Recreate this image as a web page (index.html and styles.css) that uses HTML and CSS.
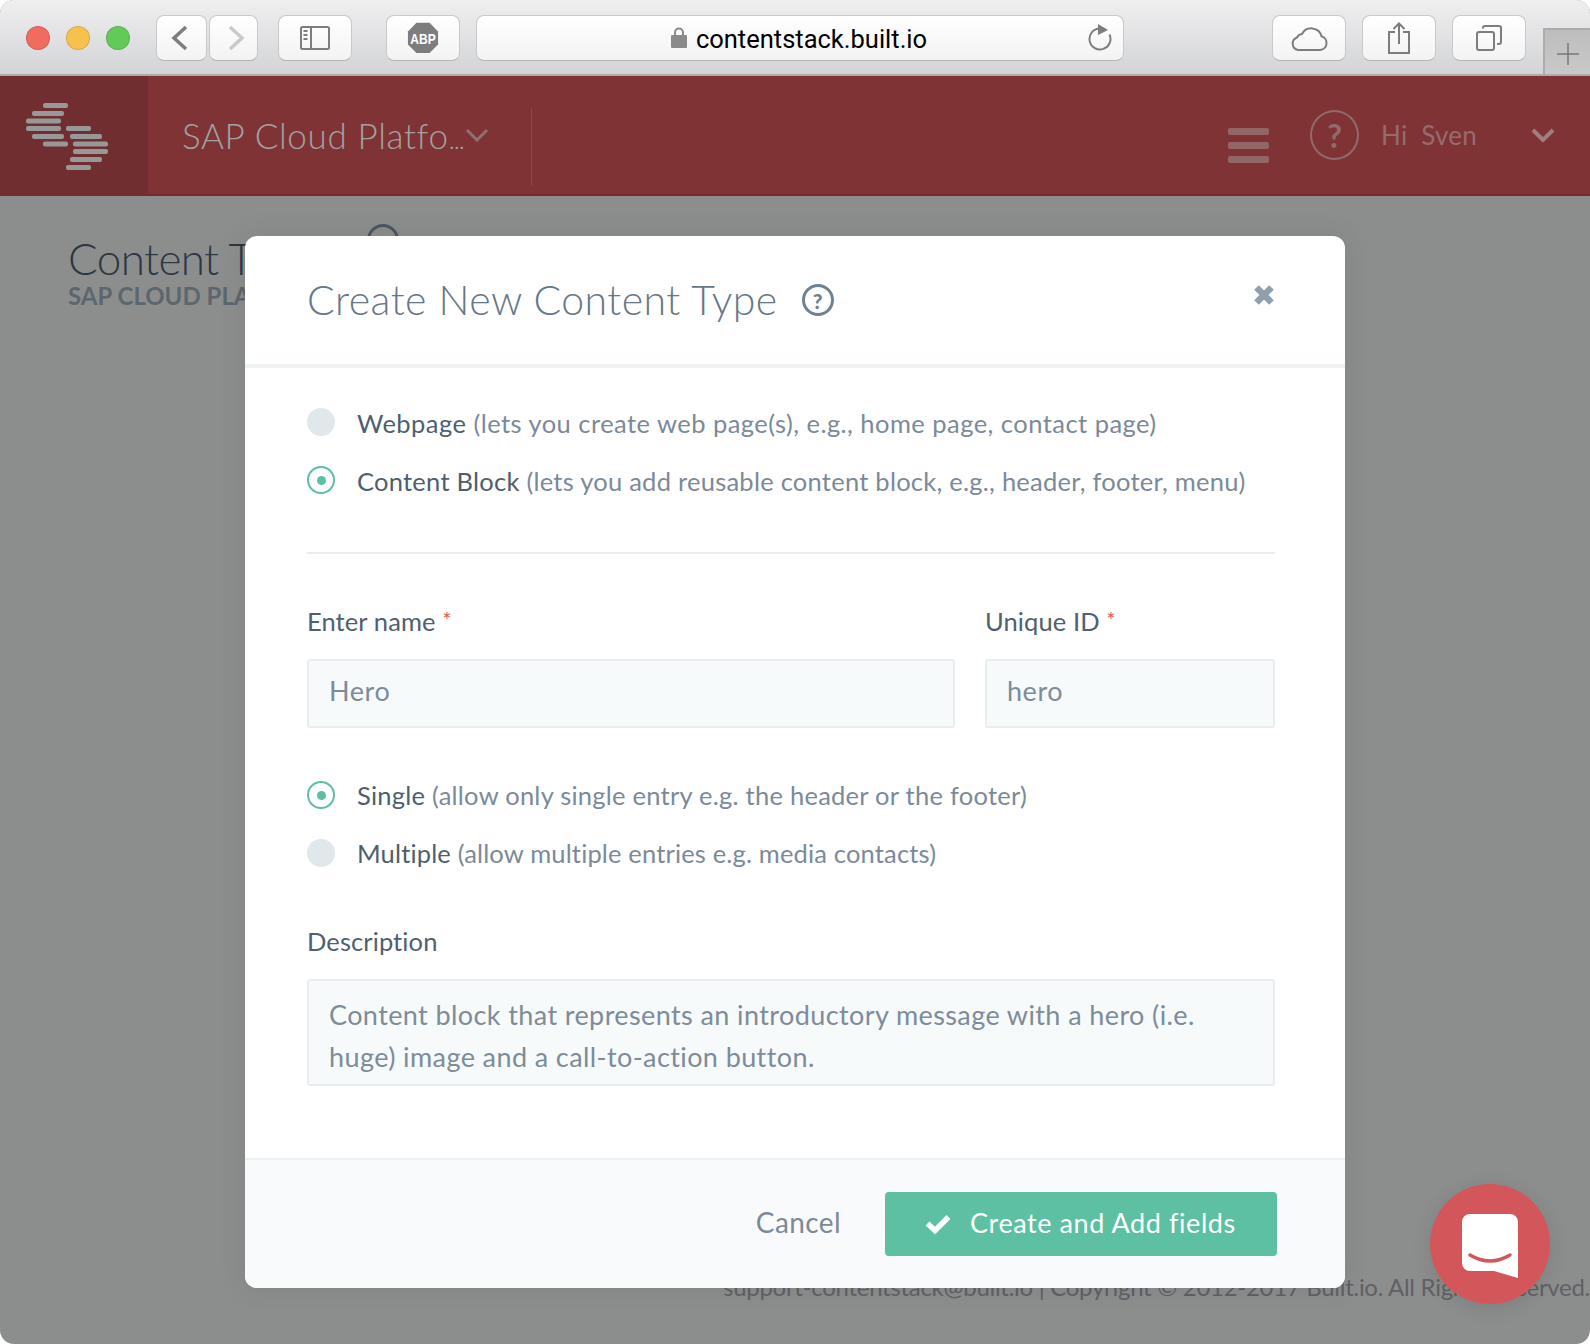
FILE: index.html
```html
<!DOCTYPE html>
<html lang="en">
<head>
<meta charset="utf-8">
<title>Create New Content Type</title>
<link rel="stylesheet" href="styles.css">
</head>
<body>
<div class="window">
  <div class="toolbar">
    <div class="lights"><span class="light red"></span><span class="light yellow"></span><span class="light green"></span></div>
    <div class="nav-pair">
      <button class="tb tb-back"><svg width="17" height="26" viewBox="0 0 17 26"><path d="M15 2 3 13l12 11" class="ic"/></svg></button>
      <button class="tb tb-fwd"><svg width="17" height="26" viewBox="0 0 17 26"><path d="M2 2l12 11L2 24" class="ic ic-faint"/></svg></button>
    </div>
    <button class="tb tb-wide tb-side"><svg width="30" height="24" viewBox="0 0 30 24"><rect x="1" y="1" width="28" height="22" rx="1.5" class="ic ic-thin"/><path d="M11 1v22" class="ic ic-thin"/><path d="M3.5 5h4M3.5 9h4M3.5 13h4" class="ic ic-thin"/></svg></button>
    <button class="tb tb-wide tb-abp"><svg width="32" height="32" viewBox="0 0 34 34"><path d="M10 .8h14L33 10v14l-9 9H10l-9-9V10z" fill="#7d7d7d"/><text x="17" y="23" class="abp-text" text-anchor="middle" textLength="27" lengthAdjust="spacingAndGlyphs">ABP</text></svg></button>
    <div class="url">
      <span class="url-main"><svg class="lock" width="16" height="21" viewBox="0 0 16 21"><path d="M4 9V5.500a4 4 0 0 1 8 0V9" fill="none" stroke="#8a8a8a" stroke-width="2"/><rect y="8" width="16" height="13" rx="1" fill="#8a8a8a"/></svg>contentstack.built.io</span>
      <svg class="reload" width="24" height="28" viewBox="0 0 24 28"><path d="M21.500 11.500A10.500 10.500 0 1 1 11 5.500" class="ic ic-thin"/><path d="M10 1l10 6-10 5z" fill="#7d7d7d"/></svg>
    </div>
    <button class="tb tb-wide tb-cloud"><svg width="38" height="26" viewBox="0 0 38 26"><path d="M8 25h22a7 7 0 0 0 1.500-13.700A10.500 10.500 0 0 0 12 9a6 6 0 0 0-5 3.500A6.500 6.500 0 0 0 8 25z" class="ic ic-thin"/></svg></button>
    <button class="tb tb-wide tb-share"><svg width="24" height="32" viewBox="0 0 24 32"><path d="M8 10H2v21h20V10h-6" class="ic ic-thin"/><path d="M12 22V2M6.500 7 12 1.500 17.500 7" class="ic ic-thin"/></svg></button>
    <button class="tb tb-wide tb-tabs"><svg width="26" height="26" viewBox="0 0 26 26"><rect x="1" y="7" width="17" height="18" rx="2" class="ic ic-thin"/><path d="M7 3.500V3a2 2 0 0 1 2-2h14a2 2 0 0 1 2 2v14a2 2 0 0 1-2 2h-2" class="ic ic-thin"/></svg></button>
    <div class="newtab"><svg width="22" height="22" viewBox="0 0 22 22"><path d="M11 0v22M0 11h22" stroke="#777" stroke-width="1.500" fill="none"/></svg></div>
  </div>

  <header class="appbar">
    <div class="brand">
      <svg width="82" height="68" viewBox="0 0 82 68">
        <g fill="#989898">
          <rect x="17" y="0" width="25" height="5" rx="2"/><rect x="6" y="8" width="32" height="5" rx="2"/><rect x="0" y="15.500" width="35" height="5" rx="2"/><rect x="0" y="23" width="35" height="5" rx="2"/><rect x="6" y="31" width="32" height="5" rx="2"/><rect x="17" y="38.500" width="25" height="5" rx="2"/>
          <rect x="40" y="23" width="25" height="5" rx="2"/><rect x="44" y="31" width="32" height="5" rx="2"/><rect x="47" y="38.500" width="35" height="5" rx="2"/><rect x="47" y="46" width="35" height="5" rx="2"/><rect x="44" y="54" width="32" height="5" rx="2"/><rect x="40" y="62" width="25" height="5" rx="2"/>
        </g>
      </svg>
    </div>
    <div class="stack-name"><span>SAP Cloud Platfo<span class="dots">...</span></span><svg width="24" height="14" viewBox="0 0 24 14"><path d="M2 2l10 10L22 2" class="chev"/></svg></div>
    <div class="appbar-right">
      <div class="burger"><span></span><span></span><span></span></div>
      <div class="help-big">?</div>
      <div class="hi">Hi&nbsp; Sven</div>
      <svg width="24" height="14" viewBox="0 0 24 14"><path d="M2 2l10 10L22 2" class="chev chev-bold"/></svg>
    </div>
  </header>

  <main class="page">
    <div class="page-head">
      <h1 class="page-title">Content T</h1>
      <div class="page-sub">SAP CLOUD PLA</div>
      <span class="page-help"></span>
    </div>
    <footer class="page-foot">support-contentstack@built.io | Copyright © 2012-2017 Built.io. All Rights Reserved.</footer>
  </main>

  <section class="modal">
    <div class="modal-head">
      <h2 class="modal-title">Create New Content Type</h2>
      <span class="help-small">?</span>
      <svg class="close" width="22" height="22" viewBox="0 0 22 22"><path d="M3.500 3.500l15 15M18.500 3.500l-15 15" stroke="#8e9fae" stroke-width="6.500" fill="none"/></svg>
    </div>
    <div class="modal-body">
      <div class="radios">
        <div class="radio-row"><span class="radio"></span><span class="opt opt-a"><b>Webpage</b> (lets you create web page(s), e.g., home page, contact page)</span></div>
        <div class="radio-row"><span class="radio on"></span><span class="opt opt-b"><b>Content Block</b> (lets you add reusable content block, e.g., header, footer, menu)</span></div>
      </div>
      <hr class="rule">
      <div class="fields">
        <div class="field field-name"><label class="lbl">Enter name <i>*</i></label><input class="inp" value="Hero"></div>
        <div class="field field-id"><label class="lbl">Unique ID <i>*</i></label><input class="inp" value="hero"></div>
      </div>
      <div class="radios radios-2">
        <div class="radio-row"><span class="radio on"></span><span class="opt opt-b"><b>Single</b> (allow only single entry e.g. the header or the footer)</span></div>
        <div class="radio-row"><span class="radio"></span><span class="opt opt-c"><b>Multiple</b> (allow multiple entries e.g. media contacts)</span></div>
      </div>
      <label class="lbl lbl-desc">Description</label>
      <textarea class="inp area" rows="2">Content block that represents an introductory message with a hero (i.e.
huge) image and a call-to-action button.</textarea>
    </div>
    <div class="modal-foot">
      <a class="cancel">Cancel</a>
      <button class="primary"><svg width="26" height="20" viewBox="0 0 26 20"><path d="M2.500 9.500l7.500 7L23.500 3" stroke="#fff" stroke-width="5.500" fill="none"/></svg><span>Create and Add fields</span></button>
    </div>
  </section>

  <div class="chat">
    <svg width="56" height="64" viewBox="0 0 56 64"><path d="M8 0h40a8 8 0 0 1 8 8v56l-24-7H8a8 8 0 0 1-8-8V8a8 8 0 0 1 8-8z" fill="#fff"/><path d="M8 41q20 12 40 0" stroke="#d1575a" stroke-width="3.500" fill="none" stroke-linecap="round"/></svg>
  </div>
</div>
</body>
</html>
```

FILE: styles.css
```css
* { box-sizing: border-box; }
html, body { margin: 0; height: 100%; background: #fff; }
body { width: 1590px; height: 1344px; overflow: hidden; font-family: "Lato", "Open Sans", sans-serif; }

.window { position: relative; width: 1590px; height: 1344px; display: flex; flex-direction: column; border-radius: 14px; overflow: hidden; background: #8c8e8e; }

/* Browser toolbar */
.toolbar { position: relative; height: 76px; flex: none; display: flex; align-items: flex-start; padding: 15px 0 0 26px; background: linear-gradient(#efeff0, #d3d4d6); border-bottom: 2px solid #acacac; }
.lights { display: flex; gap: 16px; margin-top: 11px; margin-right: 26px; }
.light { width: 24px; height: 24px; border-radius: 50%; border: 1px solid rgba(0,0,0,.12); }
.red { background: #f16c60; }
.yellow { background: #f7c14e; }
.green { background: #62cb57; }
.tb { height: 46px; padding: 0; display: flex; align-items: center; justify-content: center; background: linear-gradient(#fff, #f3f3f3); border: 1px solid #c9c9c9; border-bottom-color: #b4b4b4; border-radius: 8px; }
.nav-pair { display: flex; gap: 2px; margin-right: 20px; }
.tb-back { width: 51px; padding-right: 5px; }
.tb-fwd { width: 49px; padding-left: 5px; }
.tb-wide { width: 74px; }
.tb-abp { margin-left: 34px; margin-right: 16px; }
.tb-cloud { margin-left: 148px; }
.tb-share, .tb-tabs { margin-left: 16px; }
.ic { fill: none; stroke: #7d7d7d; stroke-width: 3.500; }
.ic-thin { stroke-width: 2; }
.ic-faint { stroke: #c9c9c9; }
.abp-text { font-family: "Liberation Sans", sans-serif; font-size: 15px; font-weight: 700; fill: #fff; }
.url { position: relative; width: 648px; height: 46px; display: flex; align-items: center; justify-content: center; background: linear-gradient(#fff, #f3f3f3); border: 1px solid #c9c9c9; border-bottom-color: #b4b4b4; border-radius: 8px; }
.url-main { display: flex; align-items: center; gap: 9px; margin-left: -2px; padding-top: 2px; font-family: "Roboto", sans-serif; font-size: 25.500px; color: #000; }
.lock { margin-top: -4px; }
.reload { position: absolute; right: 11px; top: 7px; }
.newtab { position: absolute; left: 1543px; right: 0; top: 28px; height: 46px; display: flex; align-items: center; justify-content: center; background: linear-gradient(#bdbdbe, #c9c9ca); border: 2px solid #acacac; border-width: 2px 0 0 2px; padding-top: 4px; }

/* App header */
.appbar { height: 120px; flex: none; display: flex; align-items: stretch; background: #7f3335; border-bottom: 2px solid #772a2d; }
.brand { width: 148px; flex: none; padding: 27px 0 0 26px; background: #702e31; margin-bottom: -2px; }
.stack-name { position: relative; width: 384px; flex: none; display: flex; align-items: center; gap: 1px; padding-left: 34px; font-size: 35px; font-weight: 300; letter-spacing: .65px; color: #a3a1a2; }
.dots { font-size: 26px; letter-spacing: -1px; }
.stack-name::before { content: ""; position: absolute; right: 0; top: 32px; bottom: 8px; width: 1px; background: #8a4a4c; }
.chev { fill: none; stroke: #8f7071; stroke-width: 3; }
.chev-bold { stroke-width: 4; stroke: #a17d80; }
.appbar-right { flex: 1; display: flex; align-items: center; justify-content: flex-end; padding-right: 35px; color: #967476; }
.burger { display: flex; flex-direction: column; gap: 7px; width: 41px; margin-right: 41px; margin-top: 20px; }
.burger span { height: 7px; background: #926667; border-radius: 2px; }
.help-big { width: 49px; height: 50px; margin-right: 22px; border: 2.500px solid #926a6c; border-radius: 50%; display: flex; align-items: center; justify-content: center; font-size: 32px; font-weight: 700; color: #926a6c; }
.hi { font-size: 26px; margin-right: 54px; color: #956b6d; letter-spacing: .25px; }

/* Dimmed page */
.page { flex: 1; position: relative; display: flex; flex-direction: column; justify-content: space-between; padding: 39px 0 39px 68px; }
.page-head { position: relative; }
.page-title { margin: 0; font-size: 44px; line-height: 46px; font-weight: 300; letter-spacing: -.6px; color: #2d3742; white-space: nowrap; }
.page-sub { margin-top: 2px; font-size: 24px; line-height: 26px; font-weight: 700; color: #5c666f; white-space: nowrap; }
.page-help { position: absolute; left: 299px; top: -11px; width: 32px; height: 32px; border: 3px solid #4c5660; border-radius: 50%; }
.page-foot { text-align: right; font-size: 24px; line-height: 36px; letter-spacing: -.29px; color: #5f6165; white-space: nowrap; }

/* Modal */
.modal { position: absolute; left: 245px; top: 236px; width: 1100px; height: 1052px; display: flex; flex-direction: column; background: #fff; border-radius: 12px; overflow: hidden; box-shadow: 0 0 30px rgba(0,0,0,.08); }
.modal-head { height: 132px; flex: none; display: flex; align-items: center; padding: 0 70px 0 62px; border-bottom: 4px solid #eef2f2; }
.modal-title { margin: 0 0 2px; font-size: 41px; font-weight: 300; color: #667787; letter-spacing: .45px; white-space: nowrap; }
.help-small { width: 32px; height: 32px; margin-left: 24px; border: 3px solid #6f8190; border-radius: 50%; display: flex; align-items: center; justify-content: center; font-size: 21px; font-weight: 900; color: #6f8190; }
.close { margin-left: auto; margin-bottom: 10px; }
.modal-body { flex: 1; padding: 40px 70px 0 62px; }
.radios { display: flex; flex-direction: column; gap: 30px; }
.radio-row { height: 28px; display: flex; align-items: center; gap: 22px; }
.radio { width: 28px; height: 28px; flex: none; border-radius: 50%; background: #e1e8eb; }
.radio.on { background: #fff; border: 2px solid #5cc0a3; display: flex; align-items: center; justify-content: center; }
.radio.on::after { content: ""; width: 9px; height: 9px; border-radius: 50%; background: #5cc0a3; }
.opt { font-size: 25.500px; color: #7b8a99; white-space: nowrap; margin-top: 2px; }
.opt-a { letter-spacing: .46px; }
.opt-b { letter-spacing: .25px; }
.opt-c { letter-spacing: .16px; }
.opt b { font-weight: 400; color: #4d5f6f; }
.rule { margin: 58px 0 0; height: 2px; border: 0; background: #e8edee; }
.fields { display: flex; gap: 30px; margin-top: 50px; }
.field-name { width: 648px; }
.field-id { width: 290px; }
.lbl { display: block; font-size: 25.500px; line-height: 32px; letter-spacing: .1px; color: #4f6070; }
.lbl i { font-style: normal; color: #e05a5a; font-size: 22px; vertical-align: 3px; }
.inp { display: block; width: 100%; height: 69px; margin-top: 22px; padding: 0 20px 6px; background: #f7fafb; border: 2px solid #e8edee; border-radius: 3px; font: inherit; font-size: 27px; letter-spacing: .55px; color: #7d8c99; outline: 0; }
.radios-2 { margin-top: 53px; gap: 30px; }
.radios-2 .opt { margin-top: 0; }
.lbl-desc { margin-top: 58px; }
.area { height: 107px; margin-top: 22px; padding: 13px 20px 0; line-height: 42px; letter-spacing: .4px; resize: none; overflow: hidden; }
.modal-foot { height: 130px; flex: none; display: flex; align-items: center; justify-content: flex-end; padding: 0 68px 0 0; gap: 44px; background: #f9fafc; border-top: 2px solid #eef1f3; }
.cancel { font-size: 28px; color: #7b8a99; letter-spacing: .4px; padding-bottom: 4px; }
.primary { width: 392px; height: 64px; display: flex; align-items: center; gap: 19px; padding: 0 0 0 40px; background: #5dc0a3; border: 0; border-radius: 4px; font: inherit; font-size: 27px; letter-spacing: .58px; color: #fff; white-space: nowrap; }
.primary span { padding-bottom: 4px; }

/* Chat launcher */
.chat { position: absolute; left: 1430px; top: 1184px; width: 120px; height: 120px; border-radius: 50%; background: #d3575a; display: flex; align-items: flex-start; justify-content: center; padding-top: 30px; box-shadow: 0 4px 20px rgba(0,0,0,.1); }
```
